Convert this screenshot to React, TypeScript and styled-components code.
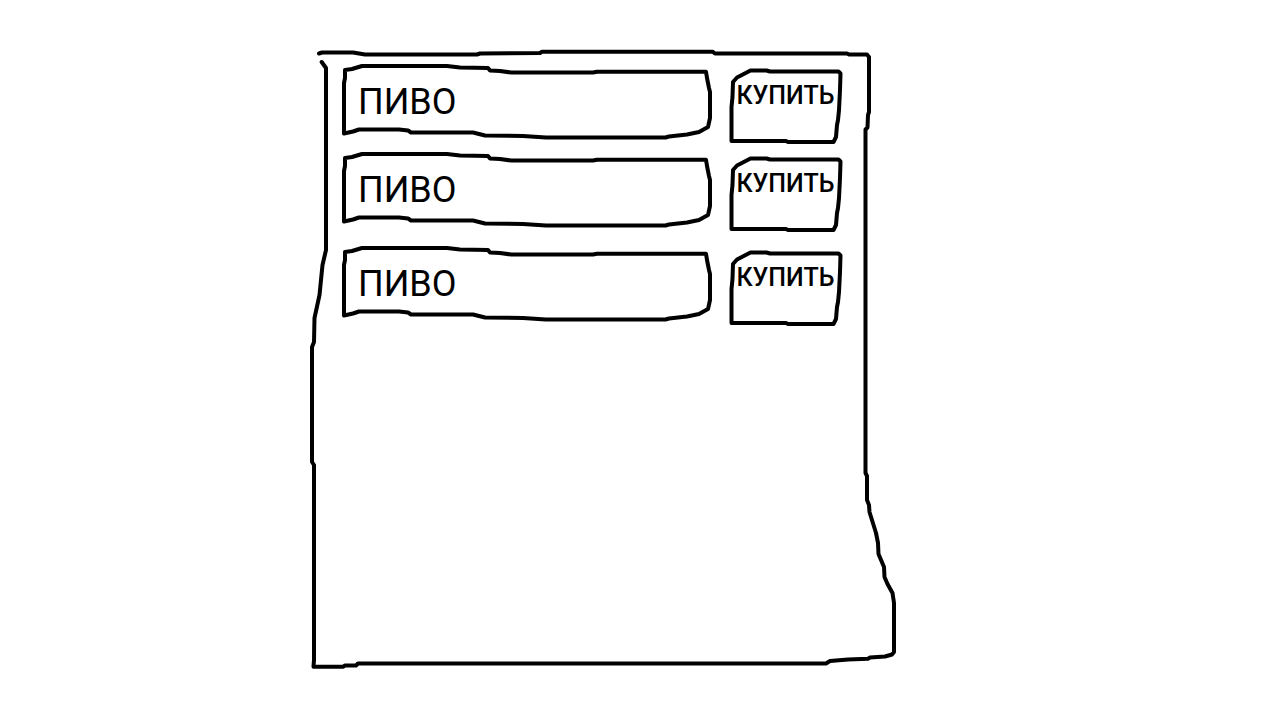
import React from "react";
import styled, { createGlobalStyle } from "styled-components";

const GlobalStyle = createGlobalStyle`
  *, *::before, *::after { box-sizing: border-box; }
  body {
    margin: 0;
    background: #fff;
    color: #000;
    font-family: Roboto, "Noto Sans", sans-serif;
  }
`;

const Page = styled.main`
  display: grid;
  grid-template-columns: minmax(0, 311fr) minmax(0, 585fr) minmax(0, 367fr);
  min-height: 100vh;
  padding: 50px 0 39px;
`;

const Panel = styled.section`
  position: relative;
  grid-column: 2;
  padding: 14px 54px 14px 31px;
`;

const Sketch = styled.svg`
  position: absolute;
  inset: 0;
  width: 100%;
  height: 100%;
  overflow: visible;
  pointer-events: none;
  fill: none;
  stroke: #000;
  stroke-width: 4px;
  stroke-linecap: round;
  stroke-linejoin: round;

  path { vector-effect: non-scaling-stroke; }
`;

const ProductList = styled.ul`
  margin: 0;
  padding: 0;
  list-style: none;
`;

const ProductRow = styled.li`
  display: grid;
  grid-template-columns: minmax(0, 1fr) 113px;
  column-gap: 17px;
  height: 80px;
  margin-bottom: 8px;

  &:last-child { margin-top: 14px; }
`;

const ProductName = styled.div`
  position: relative;
  display: flex;
  align-items: center;
  height: 75px;
  padding-left: 16px;
  font-size: 36px;
  line-height: 40px;
  font-weight: 400;
`;

const BuyButton = styled.button`
  position: relative;
  display: flex;
  align-items: flex-start;
  justify-content: center;
  align-self: end;
  height: 75px;
  padding: 12px 0 0;
  border: 0;
  background: none;
  color: inherit;
  font: 500 25px/30px Roboto, "Noto Sans", sans-serif;
  cursor: pointer;
`;

const FRAME =
  "M319 53.5L322 52.5H353L365 54.5H477L480 53.5L540 53L542 51.7H712.5L715 53.5H847L849 54.5H867L869 57V112L868 115L867.5 127.5L865.5 129.5V473L867 476V500L869 505L869.5 512L876 533L878 543L878.5 554L884 567L884.5 577L887.5 584L892.5 593L894 603V652L892 654.5L885 656.5L870 657.5L868 658.7L848 659.5L830 661L826 663.5H358L356 665.5H345L343 666.7H313.5L314 660V465L312 462V347L314 342L314.5 318L319.5 295L322.5 265L326 250V68L321.7 62";

const FIELD =
  "M345 70L352 69L362 66H447L460 67.5L488 68L490 70.5L500 71L511 72.5H593L597 71.7H706L707 78L709 88L710 92V118L708 127L699 132L687 134.5L669 136.5L665.5 137.5H546L523 136L485 135.5L473 132.5H411L408 130.5L399 129.5H359L353 131.5L344 133.5V83L345 78Z";

const BUTTON =
  "M731.5 141V107L732.5 97L733 82L737 77.5L750.5 70.5H766.5L770 71.5H838.5L840.5 73.5L840 90L839 110L838 120L837 125L836 137L833.5 142H788L786 141Z";

function Outline({ viewBox, d }: { viewBox: string; d: string }) {
  return (
    <Sketch viewBox={viewBox} preserveAspectRatio="none" aria-hidden="true">
      <path d={d} />
    </Sketch>
  );
}

const products = [
  { id: 1, name: "ПИВО" },
  { id: 2, name: "ПИВО" },
  { id: 3, name: "ПИВО" },
];

export default function App() {
  return (
    <>
      <GlobalStyle />
      <Page>
        <Panel>
          <Outline viewBox="311 50 585 618" d={FRAME} />
          <ProductList>
            {products.map((product) => (
              <ProductRow key={product.id}>
                <ProductName>
                  <Outline viewBox="342 64 370 75" d={FIELD} />
                  {product.name}
                </ProductName>
                <BuyButton type="button">
                  <Outline viewBox="729 69 113 75" d={BUTTON} />
                  КУПИТЬ
                </BuyButton>
              </ProductRow>
            ))}
          </ProductList>
        </Panel>
      </Page>
    </>
  );
}
